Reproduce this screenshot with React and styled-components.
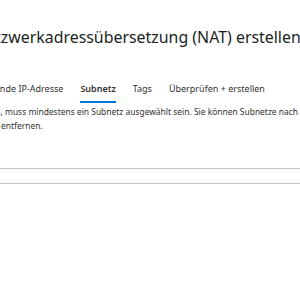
import React from 'react';
import styled, { createGlobalStyle } from 'styled-components';

const GlobalStyle = createGlobalStyle`
  html, body {
    margin: 0;
    padding: 0;
    background: #fff;
    overflow: hidden;
  }
  body {
    font-family: 'Segoe UI', 'Noto Sans', sans-serif;
    color: #323130;
  }
`;

const Page = styled.div`
  width: 300px;
  height: 300px;
  overflow: hidden;
  display: flex;
  flex-direction: column;
`;

const Title = styled.h1`
  margin: 27px 0 0 -26px;
  font-size: 15.9px;
  font-weight: 400;
  line-height: 20px;
  white-space: nowrap;
  color: #201f1e;
`;

const TabBar = styled.div`
  display: flex;
  gap: 17px;
  margin: 35px 0 0 -37px;
  white-space: nowrap;
`;

const Tab = styled.div`
  font-size: 9px;
  line-height: 14px;
  padding-bottom: 5px;
  font-weight: ${({ active }) => (active ? 600 : 400)};
  color: #323130;
  border-bottom: 2px solid ${({ active }) => (active ? '#0078d4' : 'transparent')};
`;

const Description = styled.p`
  margin: 2px 0 0 1px;
  font-size: 8.45px;
  line-height: 14px;
  white-space: nowrap;
  text-indent: -180px;
  color: #323130;
`;

const TableHeader = styled.div`
  margin-top: 35px;
  height: 14px;
  border-top: 1px solid #c8c6c4;
  border-bottom: 1px solid #c8c6c4;
`;

const tabs = ['Ausgehende IP-Adresse', 'Subnetz', 'Tags', 'Überprüfen + erstellen'];

export default function App() {
  return (
    <>
      <GlobalStyle />
      <Page>
        <Title>Netzwerkadressübersetzung (NAT) erstellen</Title>
        <TabBar>
          {tabs.map((t) => (
            <Tab key={t} active={t === 'Subnetz'}>{t}</Tab>
          ))}
        </TabBar>
        <Description>
          Damit ein NAT-Gateway genutzt werden kann, muss mindestens ein Subnetz ausgewählt sein. Sie können Subnetze nach der Erstellung hinzufügen oder
          <br />
          entfernen.
        </Description>
        <TableHeader />
      </Page>
    </>
  );
}
